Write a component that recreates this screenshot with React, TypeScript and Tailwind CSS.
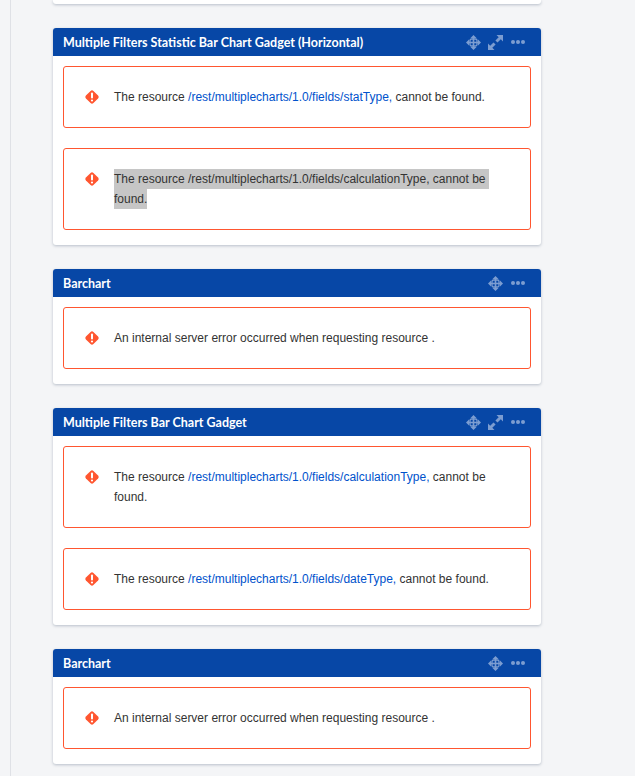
const Move = () => (
  <svg width="15" height="15" viewBox="0 0 15 15" fill="none" stroke="#7c9dd1" strokeWidth="1.6">
    <path d="M7.500 2v11M2 7.500h11" />
    <path d="M7.500 0 10.500 3h-6zM7.500 15 4.500 12h6zM0 7.500 3 4.500v6zM15 7.500 12 10.500v-6z" fill="#7c9dd1" stroke="none" />
    <rect x="4" y="4" width="7" height="7" rx="1.500" strokeWidth="1.300" />
  </svg>
);

const Expand = () => (
  <svg width="15" height="15" viewBox="0 0 15 15" fill="#7c9dd1">
    <path d="M8.500 0H15v6.500l-2.200-2.200-3.300 3.300-2.100-2.100 3.300-3.300z" />
    <path d="M6.500 15H0V8.500l2.200 2.200 3.300-3.300 2.100 2.100-3.300 3.300z" />
  </svg>
);

const Dots = () => (
  <svg width="14" height="4" viewBox="0 0 14 4" fill="#7c9dd1">
    <circle cx="2" cy="2" r="2" />
    <circle cx="7" cy="2" r="2" />
    <circle cx="12" cy="2" r="2" />
  </svg>
);

const ErrorIcon = () => (
  <svg width="16" height="16" viewBox="0 0 16 16" className="shrink-0">
    <rect x="2.700" y="2.700" width="10.600" height="10.600" rx="2" transform="rotate(45 8 8)" fill="#ff5630" />
    <rect x="7" y="3.500" width="2" height="6" rx="1" fill="#fff" />
    <circle cx="8" cy="11.500" r="1.100" fill="#fff" />
  </svg>
);

const Alert = ({ children }: { children: React.ReactNode }) => (
  <div className="flex gap-[14px] rounded-[3px] border border-[#ff5630] pl-[20px] pr-[20px] py-[20px]">
    <span className="flex h-5 items-center"><ErrorIcon /></span>
    <div className="text-[12px] leading-[20px] text-[#333]">{children}</div>
  </div>
);

const Res = ({ path }: { path: string }) => (
  <>
    The resource <span className="text-[#0052cc]">{path},</span> cannot be found.
  </>
);

const Card = ({ title, expand, children }: { title: string; expand?: boolean; children: React.ReactNode }) => (
  <section className="mb-6 overflow-hidden rounded-[3px] bg-white shadow-[0_1px_3px_rgba(9,30,66,0.25)]">
    <header className="flex h-7 items-center bg-[#0747a6] pl-[10px] pr-[16px]">
      <h2 className="flex-1 pt-[2px] text-[12.5px] font-bold text-white" style={{ fontFamily: 'Lato, sans-serif' }}>{title}</h2>
      <div className="flex items-center">
        <Move />
        {expand && <span className="ml-[7px] flex"><Expand /></span>}
        <span className="ml-[8px] flex"><Dots /></span>
      </div>
    </header>
    <div className="flex flex-col gap-5 px-[10px] pt-[10px] pb-[15px]">{children}</div>
  </section>
);

export default function App() {
  return (
    <div className="min-h-[776px] bg-[#f4f5f7]" style={{ fontFamily: '"Liberation Sans", Arial, sans-serif' }}>
      <div className="ml-[10px] min-h-[776px] border-l border-[#dfe1e6] pl-[42px] pr-[94px]">
        <div className="mb-6 h-1 rounded-b-[3px] bg-white shadow-[0_1px_3px_rgba(9,30,66,0.25)]" />
        <Card title="Multiple Filters Statistic Bar Chart Gadget (Horizontal)" expand>
          <Alert><Res path="/rest/multiplecharts/1.0/fields/statType" /></Alert>
          <Alert>
            <span className="bg-[#c6c6c6] py-[3px] pr-[3px]">The resource /rest/multiplecharts/1.0/fields/calculationType, cannot be</span>
            <br />
            <span className="bg-[#c6c6c6] py-[3px]">found.</span>
          </Alert>
        </Card>
        <Card title="Barchart">
          <Alert>An internal server error occurred when requesting resource .</Alert>
        </Card>
        <Card title="Multiple Filters Bar Chart Gadget" expand>
          <Alert><Res path="/rest/multiplecharts/1.0/fields/calculationType" /></Alert>
          <Alert><Res path="/rest/multiplecharts/1.0/fields/dateType" /></Alert>
        </Card>
        <Card title="Barchart">
          <Alert>An internal server error occurred when requesting resource .</Alert>
        </Card>
      </div>
    </div>
  );
}
